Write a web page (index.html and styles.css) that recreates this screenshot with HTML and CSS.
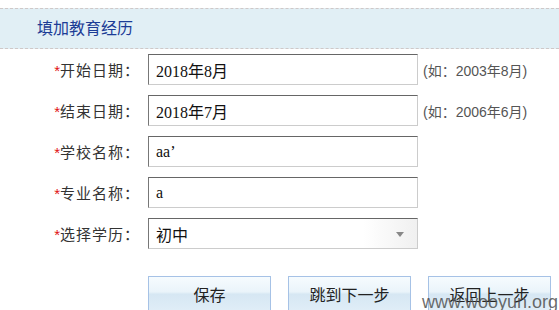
FILE: index.html
```html
<!DOCTYPE html>
<html lang="zh-CN">
<head>
  <meta charset="UTF-8">
  <title>填加教育经历</title>
  <link rel="stylesheet" href="styles.css">
</head>
<body>
  <div class="titlebar">填加教育经历</div>
  <form class="form">
    <label class="label"><span class="req">*</span>开始日期：</label>
    <input class="field" type="text" value="2018年8月">
    <span class="hint">(如：2003年8月)</span>

    <label class="label"><span class="req">*</span>结束日期：</label>
    <input class="field" type="text" value="2018年7月">
    <span class="hint">(如：2006年6月)</span>

    <label class="label"><span class="req">*</span>学校名称：</label>
    <input class="field" type="text" value="aa’">
    <span></span>

    <label class="label"><span class="req">*</span>专业名称：</label>
    <input class="field" type="text" value="a">
    <span></span>

    <label class="label"><span class="req">*</span>选择学历：</label>
    <div class="select">初中<span class="arrow"></span></div>
    <span></span>
  </form>
  <div class="buttons">
    <button class="btn" type="button">保存</button>
    <button class="btn" type="button">跳到下一步</button>
    <button class="btn" type="button">返回上一步</button>
  </div>
  <div class="watermark">www.wooyun.org</div>
</body>
</html>
```

FILE: styles.css
```css
html {
  overflow: hidden;
}

body {
  margin: 8px 0 0 0;
  font-family: "Liberation Sans", "Noto Sans CJK SC", sans-serif;
  color: #333;
  background: #fff;
  position: relative;
  height: 302px;
}

.titlebar {
  height: 39px;
  line-height: 39px;
  padding-left: 37px;
  background: #e1eff5;
  border-top: 1px dashed #cfc8c8;
  border-bottom: 1px dashed #cfc8c8;
  color: #1c3c96;
  font-size: 16px;
}

.form {
  display: grid;
  grid-template-columns: 140px 270px auto;
  column-gap: 8px;
  row-gap: 10px;
  align-items: center;
  margin-top: 5px;
}

.label {
  text-align: right;
  font-size: 15px;
  letter-spacing: 1px;
  color: #333;
}

.req {
  color: #e01010;
  letter-spacing: 0;
}

.field,
.select {
  box-sizing: border-box;
  width: 270px;
  height: 31px;
  margin: 0;
  padding: 0 7px;
  border-top: 1px solid #666;
  border-left: 1px solid #777;
  border-right: 1px solid #ccc;
  border-bottom: 1px solid #ccc;
  font-family: "Liberation Serif", "Noto Sans CJK SC", serif;
  font-size: 16px;
  color: #111;
  outline: none;
}

.select {
  display: flex;
  align-items: center;
  position: relative;
  font-family: "Noto Sans CJK SC", sans-serif;
  font-size: 16px;
  background: linear-gradient(to right, #fff 80%, #f0f0f0 100%);
}

.arrow {
  position: absolute;
  right: 13px;
  top: 13px;
  border-left: 4px solid transparent;
  border-right: 4px solid transparent;
  border-top: 5px solid #888;
}

.hint {
  font-size: 14px;
  color: #555;
  margin-left: -3px;
}

.buttons {
  display: flex;
  gap: 17px;
  margin: 27px 0 0 148px;
}

.btn {
  width: 123px;
  height: 35px;
  padding: 0;
  border: 1px solid #a6c2e6;
  background: linear-gradient(#f6fbfe 0%, #eaf4fa 45%, #d6e7f3 52%, #dfedf7 100%);
  font-family: "Noto Sans CJK SC", sans-serif;
  font-size: 16px;
  color: #222;
}

.watermark {
  position: absolute;
  left: 422px;
  top: 284px;
  font-family: "Liberation Sans", sans-serif;
  font-size: 18px;
  color: rgba(80, 80, 80, 0.85);
}
```
